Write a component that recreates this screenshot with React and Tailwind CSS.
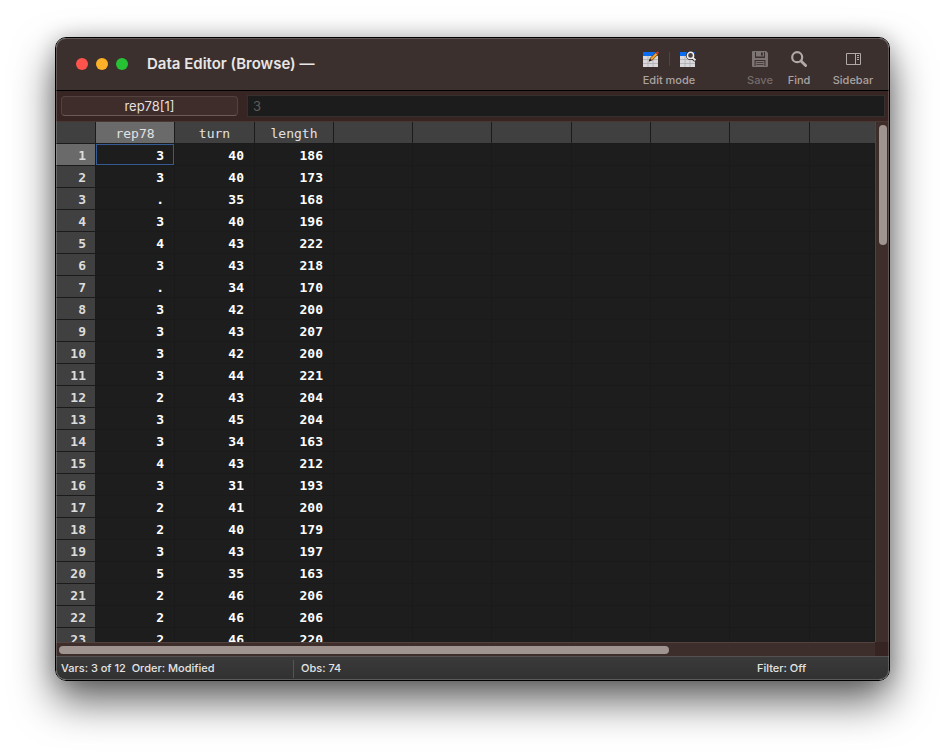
import React from "react";

const variables = ["rep78", "turn", "length"];

const observations = [
  ["3", "40", "186"],
  ["3", "40", "173"],
  [".", "35", "168"],
  ["3", "40", "196"],
  ["4", "43", "222"],
  ["3", "43", "218"],
  [".", "34", "170"],
  ["3", "42", "200"],
  ["3", "43", "207"],
  ["3", "42", "200"],
  ["3", "44", "221"],
  ["2", "43", "204"],
  ["3", "45", "204"],
  ["3", "34", "163"],
  ["4", "43", "212"],
  ["3", "31", "193"],
  ["2", "41", "200"],
  ["2", "40", "179"],
  ["3", "43", "197"],
  ["5", "35", "163"],
  ["2", "46", "206"],
  ["2", "46", "206"],
  ["2", "46", "220"],
];

const columnWidths = [
  "w-[79px]",
  "w-[80px]",
  "w-[79px]",
  "w-[79px]",
  "w-[79px]",
  "w-[80px]",
  "w-[79px]",
  "w-[79px]",
  "w-[80px]",
  "",
];

function GridSheet() {
  return (
    <>
      <rect x="0" y="1" width="15" height="15" fill="#d9d9db" />
      <rect x="0" y="1" width="15" height="4" fill="#0a6cf0" />
      <path d="M5 5v11M10 5v11M0 8.5h15M0 12.5h15" stroke="#aeacae" strokeWidth="0.8" fill="none" />
    </>
  );
}

function EditIcon() {
  return (
    <svg width="16" height="16" viewBox="0 0 16 16" aria-hidden="true">
      <GridSheet />
      <path d="M5.8 10.4 7 7 13.2 0.8 15.6 3 9.2 9.4Z" fill="#5a3a1c" />
      <path d="M7.4 7.6 12.8 2 14.4 3.5 8.9 9Z" fill="#f6a52b" />
      <path d="M12.8 1.9 14.4 0.2 16 1.6 14.6 3.5Z" fill="#d0342c" />
      <path d="M5.8 10.4 6.8 7.9 8.3 9.4Z" fill="#2a1c12" />
    </svg>
  );
}

function BrowseIcon() {
  return (
    <svg width="16" height="16" viewBox="0 0 16 16" aria-hidden="true">
      <GridSheet />
      <circle cx="10.5" cy="4.5" r="4.6" fill="#2b2422" />
      <path d="m13 7.2 2.6 2.4" stroke="#2b2422" strokeWidth="3.4" />
      <circle cx="10.5" cy="4.4" r="3.1" fill="#4a403e" stroke="#f2f2f2" strokeWidth="1.5" />
      <path d="m12.8 6.8 2.7 2.5" stroke="#f2f2f2" strokeWidth="1.8" />
    </svg>
  );
}

function SaveIcon() {
  return (
    <svg width="16" height="16" viewBox="0 0 16 16" aria-hidden="true">
      <path d="M0.5 0.5h13.8l1.2 1.2v13.8H0.5Z" fill="none" stroke="#7d7573" />
      <path d="M1 1h2v6H1ZM13 1h2v6h-2ZM1 7h14v2H1ZM1 9h1.6v6H1ZM13.4 9H15v6h-1.6Z" fill="#7d7573" />
      <path fill="#7d7573" fillRule="evenodd" d="M4 1h8v4.6H4ZM9 1.6v3h1.8v-3Z" />
      <path fill="#7d7573" d="M3.6 10h8.8v5.4H3.6Z" />
      <path d="M4.5 11.5h7M4.5 13.5h7" stroke="#3b302e" strokeWidth="0.8" />
    </svg>
  );
}

function FindIcon() {
  return (
    <svg width="16" height="16" viewBox="0 0 16 16" fill="none" aria-hidden="true">
      <circle cx="6.2" cy="6.2" r="5" stroke="#b0a9a7" strokeWidth="2.2" />
      <path d="m10 10 4.6 4.6" stroke="#b0a9a7" strokeWidth="2.8" strokeLinecap="round" />
    </svg>
  );
}

function SidebarIcon() {
  return (
    <svg width="16" height="16" viewBox="0 0 16 16" fill="none" stroke="#b0a9a7" aria-hidden="true">
      <path d="M1.5 2.5h14v11h-14ZM10.5 2.5v11" />
      <path d="M12 4.5h2M12 6.5h2M12 8.5h2" />
    </svg>
  );
}

function ToolButton({ label, icon, className, disabled }) {
  return (
    <button type="button" disabled={disabled} className={"flex flex-col items-center gap-1.5 " + className}>
      {icon}
      <span className={"text-[11px] leading-[14px] font-medium " + (disabled ? "text-[#756c6a]" : "text-[#aba3a1]")}>
        {label}
      </span>
    </button>
  );
}

function TitleBar() {
  return (
    <header className="flex h-[53px] shrink-0 items-center border-b border-black bg-[#3b302e] pl-5 pr-3">
      <div className="flex gap-2">
        <button type="button" aria-label="Close" className="size-3 rounded-full bg-[#ff534c]" />
        <button type="button" aria-label="Minimize" className="size-3 rounded-full bg-[#fdb128]" />
        <button type="button" aria-label="Zoom" className="size-3 rounded-full bg-[#27c136]" />
      </div>
      <h1 className="ml-[19px] flex-1 whitespace-nowrap text-[15px] font-semibold leading-5 text-[#e9e6e5]">
        Data Editor (Browse) —
      </h1>
      <div className="flex items-start pt-2.5">
        <div role="group" aria-labelledby="mode-label" className="mr-[43px] flex w-16 flex-col items-center gap-1.5">
          <div className="flex items-center gap-2.5">
            <button type="button" aria-label="Edit">
              <EditIcon />
            </button>
            <span className="h-3.5 w-px bg-[#50443f]" />
            <button type="button" aria-label="Browse">
              <BrowseIcon />
            </button>
          </div>
          <span id="mode-label" className="whitespace-nowrap text-[11px] font-medium leading-[14px] text-[#aba3a1]">
            Edit mode
          </span>
        </div>
        <ToolButton label="Save" icon={<SaveIcon />} className="w-8" disabled />
        <ToolButton label="Find" icon={<FindIcon />} className="ml-[7px] w-8" />
        <ToolButton label="Sidebar" icon={<SidebarIcon />} className="ml-3.5 w-12" />
      </div>
    </header>
  );
}

function FormulaBar() {
  return (
    <div className="flex h-[31px] shrink-0 items-center gap-[9px] border-b border-[#4b3632] bg-[#372523] pl-[5px] pr-1">
      <button
        type="button"
        className="h-5 w-[177px] rounded-[4px] border border-[#54423f] border-b-[#6b5a57] bg-[#3e2d2b] text-[13px] leading-[18px] text-[#e4dfde]"
      >
        rep78[1]
      </button>
      <input
        aria-label="Cell value"
        defaultValue="3"
        disabled
        className="h-[22px] min-w-0 flex-1 border border-[#352f2e] bg-[#1c1c1c] px-[5px] text-[13px] text-[#5c5c5c]"
      />
    </div>
  );
}

function DataGrid() {
  return (
    <div className="min-w-0 flex-1 overflow-hidden bg-[#1d1d1d]">
      <table className="w-full table-fixed border-separate border-spacing-0 font-['DejaVu_Sans_Mono','Liberation_Mono',monospace] text-[13px] leading-[19px]">
        <colgroup>
          <col className="w-10" />
          {columnWidths.map((width, i) => (
            <col key={i} className={width} />
          ))}
        </colgroup>
        <thead>
          <tr>
            <th aria-label="Observation" className="h-[22px] border-b border-r border-[#1b1b1b] bg-[#404040] p-0" />
            {columnWidths.map((_, i) => (
              <th
                key={i}
                scope="col"
                className={
                  "h-[22px] border-b border-[#1b1b1b] p-0 pt-0.5 text-center font-normal text-[#e2e2e2] " +
                  (i === 0 ? "bg-[#6a6a6a] " : "bg-[#404040] ") +
                  (i < columnWidths.length - 1 ? "border-r" : "")
                }
              >
                {variables[i]}
              </th>
            ))}
          </tr>
        </thead>
        <tbody>
          {observations.map((row, r) => (
            <tr key={r}>
              <th
                scope="row"
                className={
                  "h-[22px] border-b border-r border-[#1b1b1b] p-0 pr-[9px] pt-0.5 text-right font-bold text-[#dcdcdc] " +
                  (r === 0 ? "bg-[#6a6a6a]" : "bg-[#404040]")
                }
              >
                {r + 1}
              </th>
              {columnWidths.map((_, c) => (
                <td
                  key={c}
                  className={
                    "h-[22px] border-b border-r border-[#1a1a1a] p-0 pr-2.5 pt-0.5 text-right font-bold text-white " +
                    (r === 0 && c === 0 ? "inset-ring inset-ring-[#345b94]" : "")
                  }
                >
                  {row[c]}
                </td>
              ))}
            </tr>
          ))}
        </tbody>
      </table>
    </div>
  );
}

function StatusBar() {
  return (
    <footer className="flex h-6 shrink-0 items-center border-t border-[#54504f] bg-linear-to-b from-[#3a3a3a] to-[#313131] text-[11px] font-medium text-[#e4e4e4]">
      <div className="w-[237px] whitespace-pre pl-[5px]">{"Vars: 3 of 12  Order: Modified"}</div>
      <div className="flex h-[18px] flex-1 items-center border-l border-[#555] pl-[7px]">Obs: 74</div>
      <div className="w-[132px]">Filter: Off</div>
    </footer>
  );
}

export default function App() {
  return (
    <div className="flex h-screen bg-white px-[55px] pb-[73px] pt-[37px] font-['Inter','Liberation_Sans',sans-serif]">
      <main className="relative flex min-w-0 flex-1 flex-col overflow-hidden rounded-[11px] border border-black shadow-[0_20px_42px_rgba(0,0,0,0.62),0_0_20px_rgba(0,0,0,0.2)] after:pointer-events-none after:absolute after:inset-0 after:rounded-[10px] after:border after:border-white/20 after:content-['']">
        <TitleBar />
        <FormulaBar />
        <div className="flex min-h-0 flex-1">
          <DataGrid />
          <div className="w-3.5 shrink-0 border-l border-[#54423f] bg-[#3d2e2c] pb-1 pl-[3px] pr-0.5 pt-[3px]">
            <div className="h-30 w-2 rounded-full bg-[#a09491]" />
          </div>
        </div>
        <div className="flex h-3.5 shrink-0">
          <div className="flex-1 border-t border-[#54423f] bg-[#3d2e2c] px-[3px] pt-[3px]">
            <div className="h-2 w-3/4 rounded-full bg-[#a09491]" />
          </div>
          <div className="w-3.5 bg-[#352421]" />
        </div>
        <StatusBar />
      </main>
    </div>
  );
}
